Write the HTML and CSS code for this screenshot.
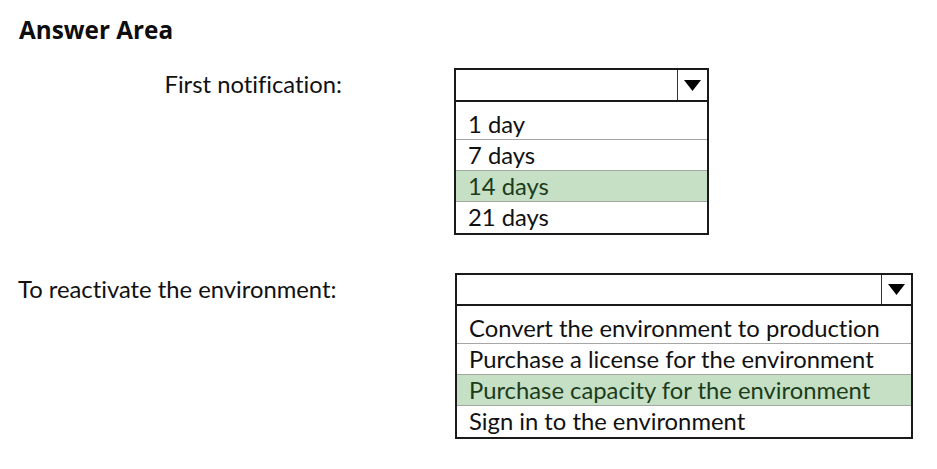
FILE: index.html
```html
<!DOCTYPE html>
<html>
<head>
<meta charset="utf-8">
<link rel="stylesheet" href="styles.css">
</head>
<body>
<div class="page">
  <h1 class="title">Answer Area</h1>
  <div class="question q1">
    <div class="label">First notification:</div>
    <div class="dropdown dd1">
      <div class="dd-head">
        <div class="dd-value"></div>
        <div class="dd-arrow"><svg width="17" height="11" viewBox="0 0 17 11"><polygon points="0,0 17,0 8.5,11" fill="#000"/></svg></div>
      </div>
      <ul class="dd-list">
        <li class="opt">1 day</li>
        <li class="opt">7 days</li>
        <li class="opt sel">14 days</li>
        <li class="opt">21 days</li>
      </ul>
    </div>
  </div>
  <div class="question q2">
    <div class="label">To reactivate the environment:</div>
    <div class="dropdown dd2">
      <div class="dd-head">
        <div class="dd-value"></div>
        <div class="dd-arrow"><svg width="17" height="11" viewBox="0 0 17 11"><polygon points="0,0 17,0 8.5,11" fill="#000"/></svg></div>
      </div>
      <ul class="dd-list">
        <li class="opt">Convert the environment to production</li>
        <li class="opt">Purchase a license for the environment</li>
        <li class="opt sel">Purchase capacity for the environment</li>
        <li class="opt">Sign in to the environment</li>
      </ul>
    </div>
  </div>
</div>
</body>
</html>
```
FILE: styles.css
```css
html, body {
  margin: 0;
  padding: 0;
  background: #fff;
}
body {
  font-family: Lato, "Open Sans", sans-serif;
  color: #111;
  font-variant-ligatures: none;
}
.page {
  padding: 16px 0 0 19px;
}
.title {
  margin: 0;
  font-family: "Open Sans", Lato, sans-serif;
  font-size: 24.3px;
  font-weight: 700;
  line-height: 28px;
  color: #0d0d0d;
}
.question {
  display: grid;
  grid-template-columns: 323px auto;
  column-gap: 112px;
  align-items: start;
}
.q1 {
  margin-top: 24px;
}
.q2 {
  margin-top: 38px;
}
.label {
  font-size: 23.8px;
  line-height: 32px;
  text-align: right;
}
.q2 .label {
  text-align: left;
  margin-left: -1px;
}
.dropdown {
  border: 2px solid #1a1a1a;
  background: #fff;
}
.dd1 { width: 251px; }
.dd2 { width: 454px; margin-left: 1px; }
.dd-head {
  display: flex;
  height: 30px;
  border-bottom: 2px solid #1a1a1a;
}
.dd-value { flex: 1; }
.dd-arrow {
  width: 29px;
  border-left: 1px solid #333;
  display: flex;
  align-items: center;
  justify-content: center;
}
.dd2 .dd-head { height: 29px; }
.dd-list {
  list-style: none;
  margin: 0;
  padding: 7px 0 0 0;
}
.opt {
  font-size: 23.8px;
  line-height: 30px;
  padding-left: 12px;
  border-bottom: 1px solid #a6a6a6;
}
.opt:last-child {
  border-bottom: none;
  line-height: 31px;
}
.opt.sel {
  background: #c5e0c4;
  color: #1c3c1c;
}
```
